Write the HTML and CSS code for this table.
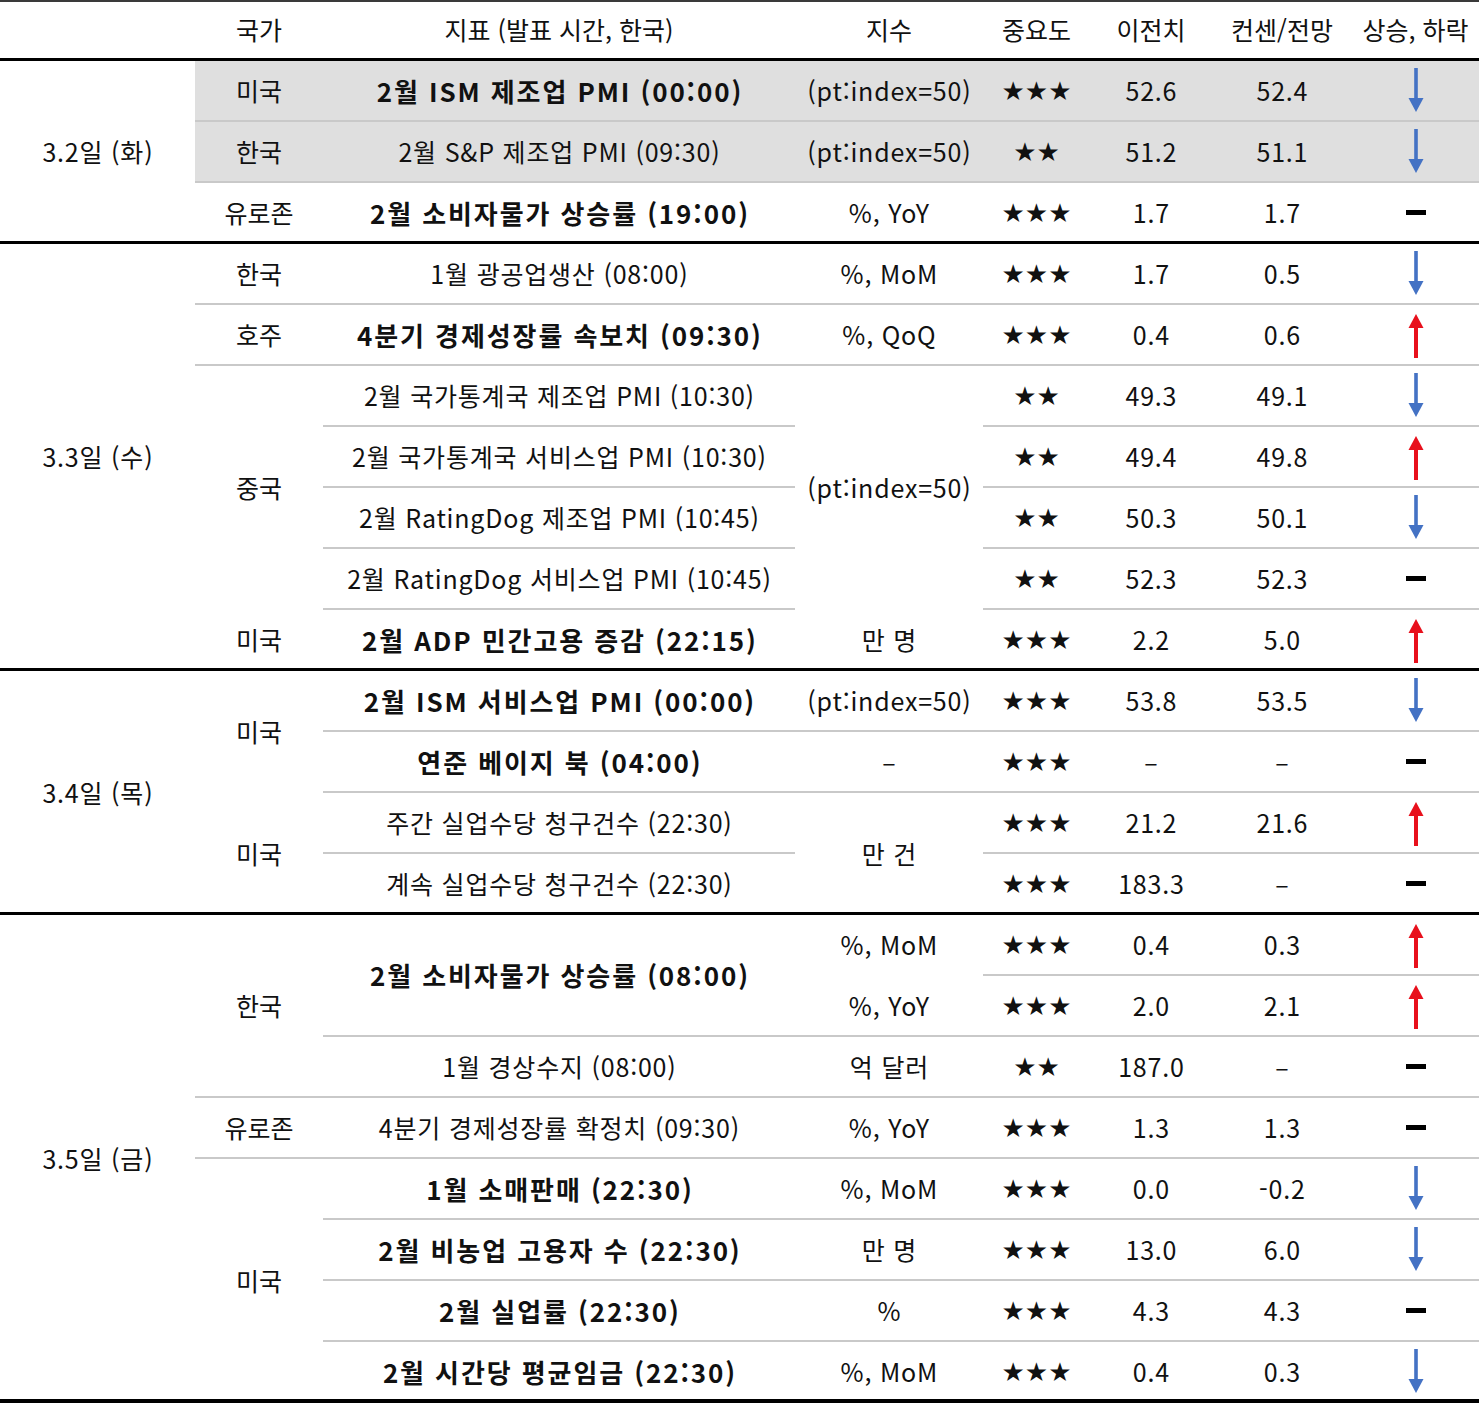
FILE: index.html
```html
<!DOCTYPE html>
<html lang="ko">
<head>
<meta charset="utf-8">
<link rel="stylesheet" href="styles.css">
<title>경제지표 일정</title>
</head>
<body>
<svg width="0" height="0" class="defs" aria-hidden="true">
  <defs>
    <symbol id="down" viewBox="0 0 20 46">
      <rect x="8.2" y="0" width="3.6" height="34" fill="#4472c4"/>
      <polygon points="2.5,30 17.5,30 10,44" fill="#4472c4"/>
    </symbol>
    <symbol id="up" viewBox="0 0 20 46">
      <rect x="8" y="12" width="4" height="34" fill="#e8101c"/>
      <polygon points="2.5,16 17.5,16 10,2" fill="#e8101c"/>
    </symbol>
  </defs>
</svg>
<table class="cal">
  <colgroup>
    <col class="c-date"><col class="c-ctry"><col class="c-ind"><col class="c-idx"><col class="c-imp"><col class="c-prev"><col class="c-cons"><col class="c-dir">
  </colgroup>
  <thead>
    <tr class="head">
      <th></th><th>국가</th><th>지표 (발표 시간, 한국)</th><th>지수</th><th>중요도</th><th>이전치</th><th>컨센/전망</th><th>상승, 하락</th>
    </tr>
  </thead>
  <tbody>
    <!-- 3.2 -->
    <tr>
      <td rowspan="3" class="gb">3.2일 (화)</td>
      <td class="sh ln ctry">미국</td><td class="sh ln b">2월 ISM 제조업 PMI (00:00)</td><td class="sh ln">(pt:index=50)</td><td class="sh ln star">★★★</td><td class="sh ln">52.6</td><td class="sh ln">52.4</td><td class="sh ln"><svg class="arr"><use href="#down"/></svg></td>
    </tr>
    <tr>
      <td class="sh ln ctry">한국</td><td class="sh ln">2월 S&amp;P 제조업 PMI (09:30)</td><td class="sh ln">(pt:index=50)</td><td class="sh ln star">★★</td><td class="sh ln">51.2</td><td class="sh ln">51.1</td><td class="sh ln"><svg class="arr"><use href="#down"/></svg></td>
    </tr>
    <tr>
      <td class="gb ctry">유로존</td><td class="gb b">2월 소비자물가 상승률 (19:00)</td><td class="gb">%, YoY</td><td class="gb star">★★★</td><td class="gb">1.7</td><td class="gb">1.7</td><td class="gb"><span class="dash"></span></td>
    </tr>
    <!-- 3.3 -->
    <tr>
      <td rowspan="7" class="gb">3.3일 (수)</td>
      <td class="ln ctry">한국</td><td class="ln">1월 광공업생산 (08:00)</td><td class="ln">%, MoM</td><td class="ln star">★★★</td><td class="ln">1.7</td><td class="ln">0.5</td><td class="ln"><svg class="arr"><use href="#down"/></svg></td>
    </tr>
    <tr>
      <td class="ln ctry">호주</td><td class="ln b">4분기 경제성장률 속보치 (09:30)</td><td class="ln">%, QoQ</td><td class="ln star">★★★</td><td class="ln">0.4</td><td class="ln">0.6</td><td class="ln"><svg class="arr"><use href="#up"/></svg></td>
    </tr>
    <tr>
      <td rowspan="4" class="ctry">중국</td><td class="ln">2월 국가통계국 제조업 PMI (10:30)</td><td rowspan="4">(pt:index=50)</td><td class="ln star">★★</td><td class="ln">49.3</td><td class="ln">49.1</td><td class="ln"><svg class="arr"><use href="#down"/></svg></td>
    </tr>
    <tr>
      <td class="ln">2월 국가통계국 서비스업 PMI (10:30)</td><td class="ln star">★★</td><td class="ln">49.4</td><td class="ln">49.8</td><td class="ln"><svg class="arr"><use href="#up"/></svg></td>
    </tr>
    <tr>
      <td class="ln">2월 RatingDog 제조업 PMI (10:45)</td><td class="ln star">★★</td><td class="ln">50.3</td><td class="ln">50.1</td><td class="ln"><svg class="arr"><use href="#down"/></svg></td>
    </tr>
    <tr>
      <td class="ln">2월 RatingDog 서비스업 PMI (10:45)</td><td class="ln star">★★</td><td class="ln">52.3</td><td class="ln">52.3</td><td class="ln"><span class="dash"></span></td>
    </tr>
    <tr>
      <td class="gb ctry">미국</td><td class="gb b">2월 ADP 민간고용 증감 (22:15)</td><td class="gb">만 명</td><td class="gb star">★★★</td><td class="gb">2.2</td><td class="gb">5.0</td><td class="gb"><svg class="arr"><use href="#up"/></svg></td>
    </tr>
    <!-- 3.4 -->
    <tr>
      <td rowspan="4" class="gb">3.4일 (목)</td>
      <td rowspan="2" class="ctry">미국</td><td class="ln b">2월 ISM 서비스업 PMI (00:00)</td><td class="ln">(pt:index=50)</td><td class="ln star">★★★</td><td class="ln">53.8</td><td class="ln">53.5</td><td class="ln"><svg class="arr"><use href="#down"/></svg></td>
    </tr>
    <tr>
      <td class="ln b">연준 베이지 북 (04:00)</td><td class="ln">–</td><td class="ln star">★★★</td><td class="ln">–</td><td class="ln">–</td><td class="ln"><span class="dash"></span></td>
    </tr>
    <tr>
      <td rowspan="2" class="gb ctry">미국</td><td class="ln">주간 실업수당 청구건수 (22:30)</td><td rowspan="2" class="gb">만 건</td><td class="ln star">★★★</td><td class="ln">21.2</td><td class="ln">21.6</td><td class="ln"><svg class="arr"><use href="#up"/></svg></td>
    </tr>
    <tr>
      <td class="gb">계속 실업수당 청구건수 (22:30)</td><td class="gb star">★★★</td><td class="gb">183.3</td><td class="gb">–</td><td class="gb"><span class="dash"></span></td>
    </tr>
    <!-- 3.5 -->
    <tr>
      <td rowspan="8" class="end">3.5일 (금)</td>
      <td rowspan="3" class="ln ctry">한국</td><td rowspan="2" class="ln b">2월 소비자물가 상승률 (08:00)</td><td>%, MoM</td><td class="ln star">★★★</td><td class="ln">0.4</td><td class="ln">0.3</td><td class="ln"><svg class="arr"><use href="#up"/></svg></td>
    </tr>
    <tr>
      <td class="ln">%, YoY</td><td class="ln star">★★★</td><td class="ln">2.0</td><td class="ln">2.1</td><td class="ln"><svg class="arr"><use href="#up"/></svg></td>
    </tr>
    <tr>
      <td class="ln">1월 경상수지 (08:00)</td><td class="ln">억 달러</td><td class="ln star">★★</td><td class="ln">187.0</td><td class="ln">–</td><td class="ln"><span class="dash"></span></td>
    </tr>
    <tr>
      <td class="ln ctry">유로존</td><td class="ln">4분기 경제성장률 확정치 (09:30)</td><td class="ln">%, YoY</td><td class="ln star">★★★</td><td class="ln">1.3</td><td class="ln">1.3</td><td class="ln"><span class="dash"></span></td>
    </tr>
    <tr>
      <td rowspan="4" class="end ctry">미국</td><td class="ln b">1월 소매판매 (22:30)</td><td class="ln">%, MoM</td><td class="ln star">★★★</td><td class="ln">0.0</td><td class="ln">-0.2</td><td class="ln"><svg class="arr"><use href="#down"/></svg></td>
    </tr>
    <tr>
      <td class="ln b">2월 비농업 고용자 수 (22:30)</td><td class="ln">만 명</td><td class="ln star">★★★</td><td class="ln">13.0</td><td class="ln">6.0</td><td class="ln"><svg class="arr"><use href="#down"/></svg></td>
    </tr>
    <tr>
      <td class="ln b">2월 실업률 (22:30)</td><td class="ln">%</td><td class="ln star">★★★</td><td class="ln">4.3</td><td class="ln">4.3</td><td class="ln"><span class="dash"></span></td>
    </tr>
    <tr>
      <td class="end b">2월 시간당 평균임금 (22:30)</td><td class="end">%, MoM</td><td class="end star">★★★</td><td class="end">0.4</td><td class="end">0.3</td><td class="end"><svg class="arr"><use href="#down"/></svg></td>
    </tr>
  </tbody>
</table>
</body>
</html>
```

FILE: styles.css
```css
html, body {
  margin: 0;
  padding: 0;
  background: #ffffff;
}
body {
  font-family: "Noto Sans CJK KR", "Noto Sans", sans-serif;
  color: #111111;
}
.defs {
  position: absolute;
  width: 0;
  height: 0;
  overflow: hidden;
}
.cal {
  width: 1479px;
  table-layout: fixed;
  border-collapse: separate;
  border-spacing: 0;
  font-size: 25px;
}
.c-date { width: 195px; }
.c-ctry { width: 128px; }
.c-ind { width: 472px; }
.c-idx { width: 188px; }
.c-imp { width: 107px; }
.c-prev { width: 122px; }
.c-cons { width: 140px; }
.c-dir { width: 127px; }

.cal th,
.cal td {
  height: 61px;
  padding: 0 0 2px 0;
  text-align: center;
  vertical-align: middle;
  font-weight: 400;
  line-height: 1;
  white-space: nowrap;
  box-sizing: border-box;
}
.cal td {
  letter-spacing: 0.8px;
  padding-left: 0.8px;
}
.cal td.ctry {
  letter-spacing: 0;
  padding-left: 0;
}
.cal td.b {
  font-weight: 700;
  font-size: 26px;
  letter-spacing: 1.9px;
  padding-left: 1.9px;
}
.cal td.star {
  font-family: "DejaVu Sans", sans-serif;
  font-size: 26px;
  letter-spacing: 0;
  padding-left: 0;
}
.head th {
  box-shadow: inset 0 2px 0 #3a3a3a, inset 0 -3px 0 #000;
}
.sh {
  background: #dfdfdf;
}
.ln {
  box-shadow: inset 0 -2px 0 #c9c9c9;
}
.gb {
  box-shadow: inset 0 -3px 0 #000;
}
.end {
  box-shadow: inset 0 -4px 0 #000;
}
.arr {
  display: block;
  width: 20px;
  height: 46px;
  margin: 0 auto;
}
.dash {
  display: block;
  width: 20px;
  height: 5px;
  margin: 0 auto;
  background: #000;
}
```
